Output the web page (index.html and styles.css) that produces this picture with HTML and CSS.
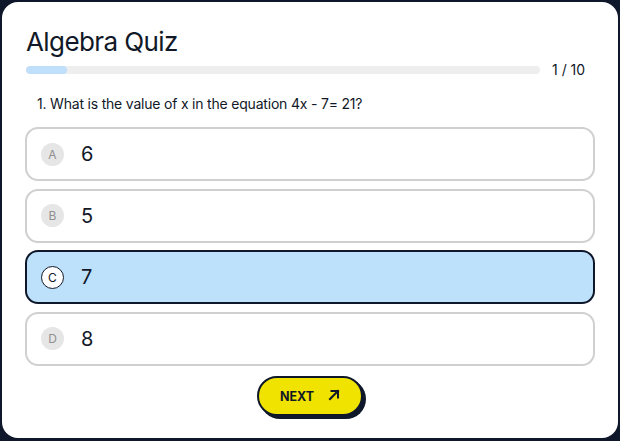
FILE: index.html
```html
<!DOCTYPE html>
<html lang="en">
<head>
<meta charset="utf-8">
<title>Algebra Quiz</title>
<link rel="stylesheet" href="styles.css">
</head>
<body>
<main class="card">
  <h1 class="title">Algebra Quiz</h1>
  <div class="progress-row">
    <div class="track"><div class="fill" style="width: 8%"></div></div>
    <span class="count">1 / 10</span>
  </div>
  <p class="question">1. What is the value of x in the equation 4x - 7= 21?</p>
  <ul class="options">
    <li class="option"><span class="letter">A</span><span class="value">6</span></li>
    <li class="option"><span class="letter">B</span><span class="value">5</span></li>
    <li class="option selected"><span class="letter">C</span><span class="value">7</span></li>
    <li class="option"><span class="letter">D</span><span class="value">8</span></li>
  </ul>
  <div class="actions">
    <button class="next">NEXT
      <svg class="arrow" width="12" height="12" viewBox="0 0 12 12" fill="none" stroke="#111827" stroke-width="2" stroke-linecap="square"><path d="M2 10 L10 2"/><path d="M3.5 2 H10 V8.5"/></svg>
    </button>
  </div>
</main>
</body>
</html>
```
FILE: styles.css
```css
* { box-sizing: border-box; }
html, body { margin: 0; padding: 0; }
body {
  background: #0f172a;
  font-family: Inter, "Noto Sans", sans-serif;
  color: #111827;
  width: 620px;
  height: 441px;
}
.card {
  width: 620px;
  height: 440px;
  background: #fff;
  border: 2px solid #0f172a;
  border-radius: 18px;
  padding: 24px 23px 0 23px;
}
.title {
  margin: 0;
  font-size: 26px;
  line-height: 32px;
  font-weight: 400;
  letter-spacing: -0.6px;
  padding-left: 1px;
}
.progress-row {
  margin-top: 2px;
  display: flex;
  align-items: center;
  height: 20px;
  padding-left: 1px;
}
.track {
  width: 514px;
  height: 8px;
  border-radius: 4px;
  background: #eeeeee;
  overflow: hidden;
}
.fill {
  height: 100%;
  background: #bfdffb;
  border-radius: 4px;
}
.count {
  margin-left: 12px;
  font-size: 14px;
  line-height: 20px;
}
.question {
  margin: 14px 0 0 12px;
  font-size: 14px;
  line-height: 20px;
  letter-spacing: -0.2px;
}
.options {
  list-style: none;
  margin: 13px 0 0 0;
  padding: 0;
  display: flex;
  flex-direction: column;
  gap: 7.5px;
  width: 570px;
}
.option {
  height: 54px;
  border: 2px solid #d0d0d0;
  border-radius: 13px;
  display: flex;
  align-items: center;
  padding-left: 14px;
  background: #fff;
}
.option.selected {
  background: #bde0fb;
  border-color: #0f172a;
}
.letter {
  width: 23px;
  height: 23px;
  border-radius: 50%;
  background: #e6e6e6;
  color: #8f8f8f;
  font-size: 12px;
  display: flex;
  align-items: center;
  justify-content: center;
}
.selected .letter {
  background: #fff;
  color: #111827;
  border: 1.5px solid #111827;
}
.value {
  margin-left: 17px;
  font-size: 20px;
}
.actions {
  display: flex;
  justify-content: center;
  margin-top: 10px;
}
.next {
  width: 106px;
  height: 40px;
  border: 2px solid #0f172a;
  border-radius: 20px;
  background: #f0e300;
  box-shadow: 3px 3px 0 #0f172a;
  font-family: Inter, "Noto Sans", sans-serif;
  font-weight: 700;
  font-size: 12.5px;
  color: #111827;
  display: flex;
  align-items: center;
  justify-content: center;
  gap: 14px;
  padding: 2px 0 0 0;
}
.arrow { margin-top: -3px; }
```
